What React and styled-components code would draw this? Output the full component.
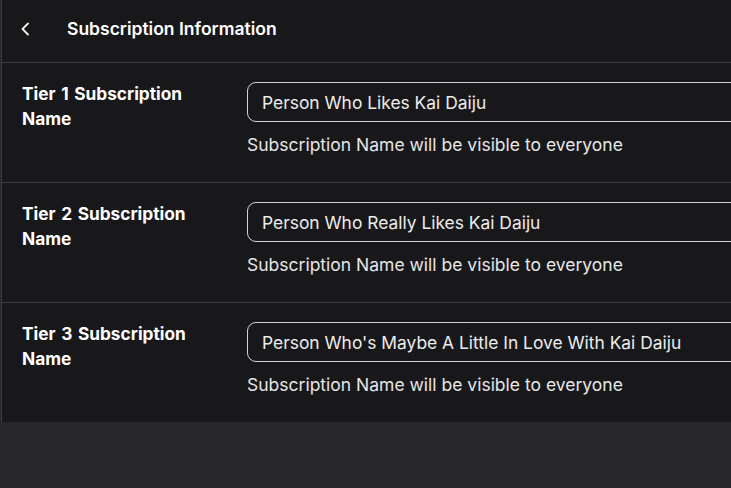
import styled, { createGlobalStyle } from "styled-components";

const GlobalStyle = createGlobalStyle`
  html, body {
    margin: 0;
    padding: 0;
    background: #27272c;
    overflow: hidden;
  }
  * { box-sizing: border-box; }
`;

const Page = styled.div`
  width: 731px;
  height: 488px;
  background: #27272c;
  font-family: Inter, "Noto Sans", sans-serif;
`;

const Panel = styled.div`
  width: 900px;
  margin-left: 1px;
  border-left: 1px solid #3b3b40;
  background: #18181b;
`;

const Header = styled.div`
  height: 63px;
  display: flex;
  align-items: center;
  padding: 0 0 5px 17px;
  border-bottom: 1px solid #38383d;
`;

const BackButton = styled.button`
  width: 14px;
  height: 20px;
  padding: 0;
  border: none;
  background: none;
  color: #f2f2f2;
  display: flex;
  align-items: center;
  margin-right: 34px;
`;

const Title = styled.h1`
  margin: 0;
  font-size: 17.5px;
  font-weight: 600;
  color: #ffffff;
`;

const Row = styled.div`
  height: ${({ $last }) => ($last ? "119px" : "120px")};
  display: flex;
  padding: 18px 0 0 20px;
  border-bottom: ${({ $last }) => ($last ? "none" : "1px solid #38383d")};
`;

const Label = styled.div`
  width: 190px;
  margin-right: 35px;
  font-size: 17.3px;
  font-weight: 700;
  line-height: 25px;
  word-spacing: 1.5px;
  color: #ffffff;
`;

const Field = styled.div`
  display: flex;
  flex-direction: column;
  padding-top: 1px;
`;

const Input = styled.div`
  width: 560px;
  height: 40px;
  border: 1px solid #d2d2d6;
  border-radius: 9px;
  display: flex;
  align-items: center;
  padding-left: 14px;
  font-size: 17.4px;
  color: #ececec;
`;

const Hint = styled.div`
  margin-top: 11px;
  font-size: 17.5px;
  line-height: 24px;
  color: #e6e6e6;
`;

const tiers = [
  { tier: 1, name: "Person Who Likes Kai Daiju" },
  { tier: 2, name: "Person Who Really Likes Kai Daiju" },
  { tier: 3, name: "Person Who's Maybe A Little In Love With Kai Daiju" },
];

const App = () => {
  return (
    <Page>
      <GlobalStyle />
      <Panel>
        <Header>
          <BackButton>
            <svg width="14" height="16" viewBox="0 0 14 16" fill="none">
              <path
                d="M9 2.5L3.5 8L9 13.5"
                stroke="currentColor"
                strokeWidth="1.8"
                strokeLinecap="round"
                strokeLinejoin="round"
              />
            </svg>
          </BackButton>
          <Title>Subscription Information</Title>
        </Header>
        {tiers.map((t, i) => (
          <Row key={t.tier} $last={i === tiers.length - 1}>
            <Label>Tier {t.tier} Subscription Name</Label>
            <Field>
              <Input>{t.name}</Input>
              <Hint>Subscription Name will be visible to everyone</Hint>
            </Field>
          </Row>
        ))}
      </Panel>
    </Page>
  );
};

export default App;
